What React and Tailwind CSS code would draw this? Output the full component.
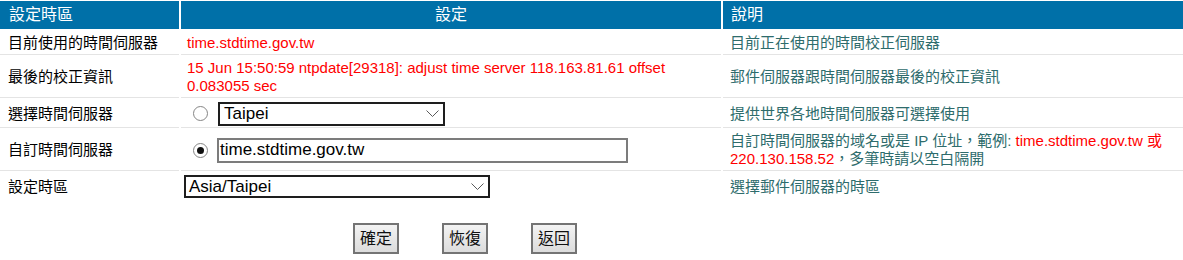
const font = { fontFamily: '"Liberation Sans", "Noto Sans CJK TC", sans-serif' };

function Chevron() {
  return (
    <svg width="13" height="8" viewBox="0 0 13 8" className="shrink-0">
      <polyline points="0.5,0.5 6.5,6.5 12.5,0.5" fill="none" stroke="#5a5a5a" strokeWidth="1" />
    </svg>
  );
}

function Radio({ checked }) {
  return (
    <span className="w-[15px] h-[15px] rounded-full border border-[#858585] bg-white flex items-center justify-center shrink-0">
      {checked && <span className="w-[7px] h-[7px] rounded-full bg-[#111]" />}
    </span>
  );
}

function Cell({ children, className = '', last }) {
  return (
    <div className={`flex items-center ${last ? '' : 'border-b border-[#e4e4e4]'} ${className}`}>
      {children}
    </div>
  );
}

function Row({ h, label, children, note, last }) {
  return (
    <>
      <Cell className={`${h} pl-[8px] text-black`} last={last}>{label}</Cell>
      <Cell className={`${h} pl-[6px]`} last={last}>{children}</Cell>
      <Cell className={`${h} pl-[7px] text-[#2e6c6c]`} last={last}>{note}</Cell>
    </>
  );
}

function Button({ children }) {
  return (
    <button className="w-[46px] h-[31px] border-2 border-[#747474] bg-gradient-to-b from-[#f3f3f3] to-[#dcdcdc] text-[16px] text-[#111] flex items-center justify-center">
      {children}
    </button>
  );
}

export default function App() {
  return (
    <div className="w-[1183px] h-[260px] bg-white pt-px text-[15px] leading-[18px]" style={font}>
      <div className="grid grid-cols-[179px_540px_1fr] gap-x-[2px] gap-y-[2px]">
        {/* header */}
        <div className="h-[28px] bg-[#0070a8] text-white text-[16px] flex items-center pl-[9px]">設定時區</div>
        <div className="h-[28px] bg-[#0070a8] text-white text-[16px] flex items-center justify-center">設定</div>
        <div className="h-[28px] bg-[#0070a8] text-white text-[16px] flex items-center pl-[8px]">說明</div>

        <Row h="h-[24px]" label="目前使用的時間伺服器" note="目前正在使用的時間校正伺服器">
          <span className="text-[#ff0000]">time.stdtime.gov.tw</span>
        </Row>

        <Row h="h-[41px]" label="最後的校正資訊" note="郵件伺服器跟時間伺服器最後的校正資訊">
          <span className="text-[#ff0000] whitespace-nowrap">
            15 Jun 15:50:59 ntpdate[29318]: adjust time server 118.163.81.61 offset
            <br />
            0.083055 sec
          </span>
        </Row>

        <Row h="h-[28px]" label="選擇時間伺服器" note="提供世界各地時間伺服器可選擇使用">
          <div className="flex items-center pl-[6px]">
            <Radio />
            <div className="ml-[10px] w-[227px] h-[24px] border-2 border-[#1e1e1e] flex items-center justify-between pl-[4px] pr-[4px] text-[17px] text-black">
              <span>Taipei</span>
              <Chevron />
            </div>
          </div>
        </Row>

        <Row
          h="h-[41px]"
          label="自訂時間伺服器"
          note={
            <span className="whitespace-nowrap">
              自訂時間伺服器的域名或是 IP 位址，範例: <span className="text-[#ff0000]">time.stdtime.gov.tw 或</span>
              <br />
              <span className="text-[#ff0000]">220.130.158.52</span>，多筆時請以空白隔開
            </span>
          }
        >
          <div className="flex items-center pl-[6px]">
            <Radio checked />
            <div className="ml-[9px] w-[411px] h-[25px] border-2 border-[#7c7c7c] flex items-center pl-px text-[17px] text-black">
              time.stdtime.gov.tw
            </div>
          </div>
        </Row>

        <Row h="h-[27px]" label="設定時區" note="選擇郵件伺服器的時區" last>
          <div className="-ml-[3px] w-[306px] h-[23px] border-2 border-[#1e1e1e] flex items-center justify-between pl-[3px] pr-[4px] text-[17px] text-black">
            <span>Asia/Taipei</span>
            <Chevron />
          </div>
        </Row>
      </div>

      <div className="flex gap-[43px] pl-[353px] mt-[23px]">
        <Button>確定</Button>
        <Button>恢復</Button>
        <Button>返回</Button>
      </div>
    </div>
  );
}
